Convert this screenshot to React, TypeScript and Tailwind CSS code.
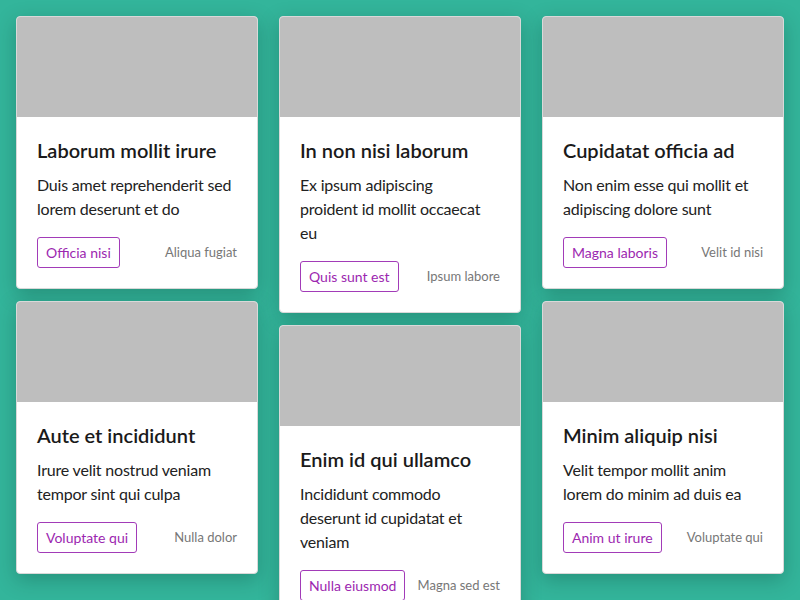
import React from 'react';

type Card = {
  title: string;
  body: string[];
  action: string;
  meta: string;
};

// body lines are kept as the reference wraps them
const columns: Card[][] = [
  [
    { title: 'Laborum mollit irure', body: ['Duis amet reprehenderit sed', 'lorem deserunt et do'], action: 'Officia nisi', meta: 'Aliqua fugiat' },
    { title: 'Aute et incididunt', body: ['Irure velit nostrud veniam', 'tempor sint qui culpa'], action: 'Voluptate qui', meta: 'Nulla dolor' },
  ],
  [
    { title: 'In non nisi laborum', body: ['Ex ipsum adipiscing', 'proident id mollit occaecat', 'eu'], action: 'Quis sunt est', meta: 'Ipsum labore' },
    { title: 'Enim id qui ullamco', body: ['Incididunt commodo', 'deserunt id cupidatat et', 'veniam'], action: 'Nulla eiusmod', meta: 'Magna sed est' },
  ],
  [
    { title: 'Cupidatat officia ad', body: ['Non enim esse qui mollit et', 'adipiscing dolore sunt'], action: 'Magna laboris', meta: 'Velit id nisi' },
    { title: 'Minim aliquip nisi', body: ['Velit tempor mollit anim', 'lorem do minim ad duis ea'], action: 'Anim ut irure', meta: 'Voluptate qui' },
  ],
];

function CardView({ card }: { card: Card }) {
  return (
    <div className="bg-white rounded-[4px] border border-[#d9d9d9] overflow-hidden shadow-[0_6px_20px_rgba(0,40,30,0.25)]">
      <div className="h-[100px] bg-[#bebebe]" />
      <div className="px-5 pt-[19px] pb-5">
        <h2 className="text-[20px] leading-[28px] font-semibold text-[#1a1a1a]">{card.title}</h2>
        <p className="mt-[9px] text-[16px] leading-[24px] tracking-[-0.2px] text-[#222]">
          {card.body.map((line) => (
            <span key={line} className="block whitespace-nowrap">
              {line}
            </span>
          ))}
        </p>
        <div className="mt-4 flex items-center justify-between gap-2">
          <button className="whitespace-nowrap border border-[#a23bb8] text-[#9c27b0] rounded-[3px] px-2 py-1 text-[14px] leading-[21px]">
            {card.action}
          </button>
          <span className="whitespace-nowrap text-[13px] text-[#777]">{card.meta}</span>
        </div>
      </div>
    </div>
  );
}

export default function App() {
  return (
    <div className="min-h-screen h-[600px] overflow-hidden bg-[#33b59b] font-['Lato',sans-serif]">
      <div className="flex gap-[21px] px-4 pt-4">
        {columns.map((col, i) => (
          <div key={i} className="flex-1 flex flex-col gap-3">
            {col.map((card) => (
              <CardView key={card.title} card={card} />
            ))}
          </div>
        ))}
      </div>
    </div>
  );
}
